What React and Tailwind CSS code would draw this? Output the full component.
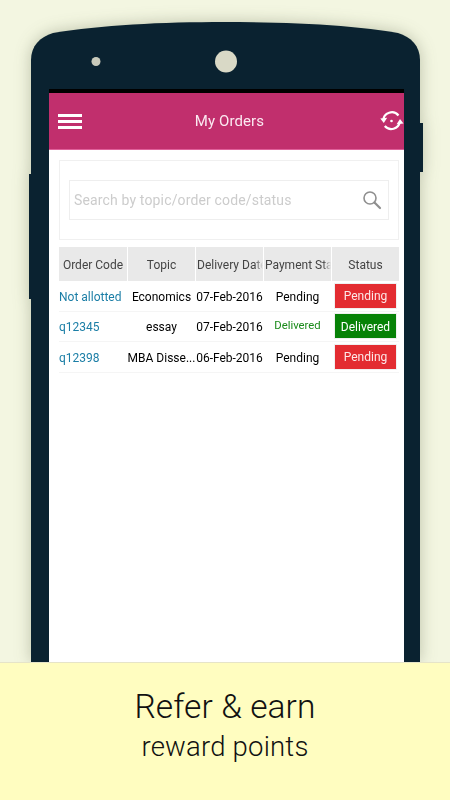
const FONT = "font-['Roboto','Liberation_Sans',sans-serif]";

const ORDERS = [
  { code: "Not allotted", topic: "Economics", date: "07-Feb-2016", payment: "Pending", status: "Pending" },
  { code: "q12345", topic: "essay", date: "07-Feb-2016", payment: "Delivered", status: "Delivered" },
  { code: "q12398", topic: "MBA Disse...", date: "06-Feb-2016", payment: "Pending", status: "Pending" },
];

const HEADERS = [
  { label: "Order Code" },
  { label: "Topic" },
  { label: "Delivery Date", clipped: true },
  { label: "Payment Status", clipped: true },
  { label: "Status" },
];

export default function App() {
  return (
    <div className={`${FONT} w-[450px] h-[800px] overflow-hidden bg-[#f3f6e1] flex flex-col`}>
      <div className="h-[662px] pt-[22px] shrink-0 overflow-hidden">
        <Phone />
      </div>

      {/* Banner */}
      <div className="h-[138px] bg-[#fffdc0] border-t border-[#e6e4c8] flex flex-col items-center pt-[25px] text-[#111]">
        <div className="text-[33.5px] leading-[38px] font-light tracking-[0.1px]">Refer &amp; earn</div>
        <div className="text-[27.5px] leading-[34px] mt-[4px] font-light tracking-[0.2px]">reward points</div>
      </div>
    </div>
  );
}

function Phone() {
  return (
    <div className="relative w-[389px] ml-[31px] h-[640px] drop-shadow-[0_0_8px_rgba(60,70,40,0.3)]">
      {/* side buttons */}
      <div className="absolute left-[-2px] top-[152px] w-[2px] h-[125px] bg-[#0a2230]" />
      <div className="absolute right-[-3px] top-[101px] w-[3px] h-[49px] bg-[#0a2230]" />

      <PhoneTop />
      <div className="h-[573px] bg-[#0a2230] pl-[18px] pr-[16px]">
        <div className="h-full bg-white flex flex-col">
          <div className="h-[4px] bg-black" />
          <TopBar />
          <div className="pl-[10px] pr-[5px] pt-[10px]">
            <SearchCard />
            <OrdersTable />
          </div>
        </div>
      </div>
    </div>
  );
}

function PhoneTop() {
  return (
    <svg width={389} height={67} viewBox="0 0 389 67" className="block">
      <path
        d="M0 67V38C0 24 9 15 22 11C70 3 130 0 194 0C258 0 320 3 367 11C380 15 389 24 389 38V67Z"
        fill="#0a2230"
      />
      <circle cx={195} cy={39.5} r={11} fill="#d9d9c6" />
      <circle cx={65} cy={39.5} r={4.5} fill="#c9cabb" />
    </svg>
  );
}

function TopBar() {
  return (
    <div className="h-[57px] bg-[#c12f6d] border-b border-[#e0609a] flex items-center justify-between pl-[9px]">
      <div className="w-[24px] flex flex-col gap-[3px]">
        <div className="h-[3px] bg-white" />
        <div className="h-[3px] bg-white" />
        <div className="h-[3px] bg-white" />
      </div>
      <div className="text-[15px] tracking-[0.1px] text-[#fbe9f1] mr-[3px]">My Orders</div>
      <SyncIcon />
    </div>
  );
}

function SyncIcon() {
  return (
    <svg width={24} height={24} viewBox="0 0 24 24" fill="none">
      <path d="M3.2 11.5A8.6 8.6 0 0 1 18.5 6.5" stroke="#fff" strokeWidth="2.2" />
      <path d="M19.8 13A8.6 8.6 0 0 1 4.8 17" stroke="#fff" strokeWidth="2.2" />
      <path d="M0.3 9.5L7.2 8.8L3.8 14Z" fill="#fff" />
      <path d="M23.5 14.5L16.6 15.2L20 10Z" fill="#fff" />
      <circle cx={11.5} cy={12} r={1.3} fill="#fff" />
    </svg>
  );
}

function SearchCard() {
  return (
    <div className="h-[80px] border border-[#f0f0f0] px-[9px] flex items-center">
      <div className="w-full h-[40px] border border-[#eeeeee] pl-[4px] pr-[6px] flex items-center justify-between">
        <span className="text-[14px] text-[#cccccc] tracking-[0.15px]">Search by topic/order code/status</span>
        <svg width={20} height={20} viewBox="0 0 20 20" fill="none" stroke="#8f8f8f">
          <circle cx={8} cy={8} r={6} strokeWidth="1.6" />
          <path d="M12.5 12.5L18 18" strokeWidth="2.2" strokeLinecap="round" />
        </svg>
      </div>
    </div>
  );
}

function OrdersTable() {
  return (
    <div className="mt-[7px] w-[340px] text-[12px]">
      <div className="grid grid-cols-[68px_67px_67px_67px_67px] gap-x-px h-[34px]">
        {HEADERS.map((h) => (
          <div
            key={h.label}
            className={`relative bg-[#e9e9e9] text-[#444] flex items-center overflow-hidden whitespace-nowrap pt-[2px] ${
              h.clipped ? "justify-start pl-px" : "justify-center"
            }`}
          >
            {h.label}
            {h.clipped && (
              <div className="absolute right-0 top-0 bottom-0 w-[8px] bg-gradient-to-r from-transparent to-[#e9e9e9]" />
            )}
          </div>
        ))}
      </div>
      {ORDERS.map((order) => (
        <OrderRow key={order.code} order={order} />
      ))}
    </div>
  );
}

function OrderRow({ order }) {
  const delivered = order.status === "Delivered";
  return (
    <div className="grid grid-cols-[68px_67px_67px_67px_67px] gap-x-px h-[30.6px] border-b border-[#f5f5f5] text-black">
      <div className="flex items-center pt-[2px] text-[#1b7ea6] whitespace-nowrap">{order.code}</div>
      <div className="flex items-center pt-[2px] justify-center whitespace-nowrap">{order.topic}</div>
      <div className="flex items-center pt-[2px] justify-center whitespace-nowrap">{order.date}</div>
      <div className={`flex items-center justify-center whitespace-nowrap ${delivered ? "text-[#1a8a1a] text-[11.3px]" : "pt-[2px]"}`}>
        {order.payment}
      </div>
      <div className="flex items-center justify-center">
        <div
          className={`w-[63px] h-[26px] pt-px flex items-center justify-center border border-[#f0f0f0] ${
            delivered ? "bg-[#078207] text-white" : "bg-[#e32c31] text-[#fde8e8]"
          }`}
        >
          {order.status}
        </div>
      </div>
    </div>
  );
}
